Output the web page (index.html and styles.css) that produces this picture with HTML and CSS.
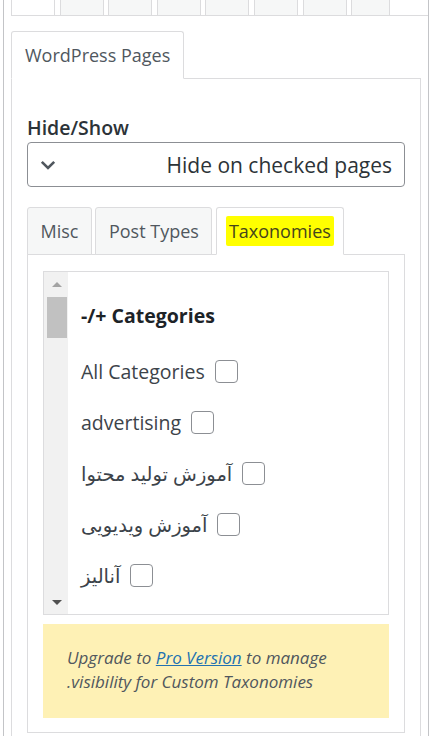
FILE: index.html
```html
<!DOCTYPE html>
<html lang="en">
<head>
    <meta charset="UTF-8">
    <meta name="viewport" content="width=device-width, initial-scale=1.0">
    <title>Widget Options - Visibility</title>
    <link rel="stylesheet" href="styles.css">
</head>
<body>
    <div class="widget-options">
        <!-- top icon tabs, scrolled mostly out of view -->
        <ul class="icon-tabs">
            <li class="current"></li>
            <li></li>
            <li></li>
            <li></li>
            <li></li>
            <li></li>
            <li></li>
            <li class="last"></li>
        </ul>

        <div class="pages-tabs">
            <span class="pages-tab">WordPress Pages</span>
        </div>

        <div class="pages-panel">
            <label class="field-label">Hide/Show</label>
            <div class="select-box">
                <svg class="chevron" width="16" height="10" viewBox="0 0 16 10">
                    <path d="M1.8 1.8 L8 8 L14.2 1.8" fill="none" stroke="#50575e" stroke-width="2.6"/>
                </svg>
                <span>Hide on checked pages</span>
            </div>

            <div class="sub-tabs">
                <span class="sub-tab">Misc</span>
                <span class="sub-tab">Post Types</span>
                <span class="sub-tab active"><mark>Taxonomies</mark></span>
            </div>

            <div class="sub-panel">
                <div class="terms-box">
                    <div class="scrollbar">
                        <span class="sb-button up"></span>
                        <span class="sb-thumb"></span>
                        <span class="sb-space"></span>
                        <span class="sb-button down"></span>
                    </div>
                    <div class="terms">
                        <h4>-/+ Categories</h4>
                        <label class="term">All Categories <input type="checkbox"></label>
                        <label class="term">advertising <input type="checkbox"></label>
                        <label class="term">آموزش تولید محتوا <input type="checkbox"></label>
                        <label class="term">آموزش ویدیویی <input type="checkbox"></label>
                        <label class="term">آنالیز <input type="checkbox"></label>
                    </div>
                </div>
                <p class="upgrade" dir="rtl">Upgrade to <a href="#">Pro Version</a> to manage visibility for Custom Taxonomies.</p>
            </div>
        </div>
    </div>
</body>
</html>
```

FILE: styles.css
```css
body {
    margin: 0;
    font-family: "Open Sans", "DejaVu Sans", sans-serif;
    color: #3c434a;
    background: #fff;
}
.widget-options {
    box-sizing: border-box;
    width: 426px;
    height: 736px;
    margin-left: 3px;
    padding: 0 7px;
    border-left: 1px solid #c3c4c7;
    border-right: 1px solid #c3c4c7;
    overflow: hidden;
}
.icon-tabs {
    display: flex;
    gap: 4.6px;
    height: 15px;
    margin: 0 -7px 0 0;
    padding: 0;
    list-style: none;
    border-bottom: 1px solid #dcdcde;
}
.icon-tabs li {
    box-sizing: border-box;
    width: 44px;
    border-left: 1px solid #dcdcde;
    border-right: 1px solid #dcdcde;
    background: #f6f7f7;
}
.icon-tabs li.current {
    background: #fff;
}
.icon-tabs li.last {
    width: 39px;
}
.pages-tabs {
    display: flex;
    margin-top: 15px;
}
.pages-tab,
.sub-tab {
    position: relative;
    box-sizing: border-box;
    height: 48px;
    margin-bottom: -1px;
    padding: 0 13px;
    line-height: 46px;
    font-size: 18px;
    color: #50575e;
    border: 1px solid #dcdcde;
    border-radius: 3px 3px 0 0;
}
.pages-tab {
    background: #fff;
    border-bottom-color: #fff;
}
.pages-panel {
    border: 1px solid #dcdcde;
    padding: 0 15px 40px;
}
.field-label {
    display: block;
    padding-top: 35px;
    font-size: 19.5px;
    font-weight: 600;
    line-height: 27px;
    color: #2c3338;
}
.select-box {
    box-sizing: border-box;
    display: flex;
    align-items: center;
    justify-content: space-between;
    height: 45px;
    margin-top: 1px;
    padding: 0 12px;
    border: 1px solid #8c8f94;
    border-radius: 4px;
    font-size: 21px;
    color: #2c3338;
}
.chevron {
    display: block;
}
.sub-tabs {
    display: flex;
    gap: 3.5px;
    margin-top: 20px;
}
.sub-tab {
    padding: 0 12.5px;
    background: #f6f7f7;
}
.sub-tab.active {
    padding: 0 12px;
    background: #fff;
    border-bottom-color: #fff;
}
.sub-tab mark {
    margin: 0 -3px;
    padding: 3px 3px;
    background: #ffff00;
    color: #45451c;
    border-radius: 2px;
}
.sub-panel {
    border: 1px solid #dcdcde;
    padding: 16px 15px 14px;
}
.terms-box {
    box-sizing: border-box;
    display: flex;
    height: 344px;
    border: 1px solid #dcdcde;
    overflow: hidden;
}
.scrollbar {
    flex: none;
    display: flex;
    flex-direction: column;
    align-items: center;
    width: 24px;
    box-sizing: border-box;
    padding-left: 2px;
    background: #f1f1f1;
}
.sb-button {
    display: flex;
    align-items: center;
    justify-content: center;
    height: 24px;
}
.sb-button::before {
    content: "";
    border-left: 5px solid transparent;
    border-right: 5px solid transparent;
}
.sb-button.up::before {
    border-bottom: 5px solid #a3a3a3;
}
.sb-button.down::before {
    border-top: 5px solid #505050;
}
.sb-thumb {
    width: 20px;
    height: 41px;
    margin-top: 1px;
    background: #c1c1c1;
}
.sb-space {
    flex: 1;
}
.terms {
    flex: 1;
    padding: 30px 0 0 13px;
}
.terms h4 {
    margin: 0 0 17px;
    font-size: 19.5px;
    font-weight: 700;
    line-height: 27px;
    color: #1d2327;
}
.term {
    display: flex;
    align-items: center;
    height: 51px;
    font-size: 19.5px;
    line-height: 27px;
    color: #3c434a;
}
.term input {
    appearance: none;
    box-sizing: border-box;
    width: 23px;
    height: 23px;
    margin: 0 0 0 10px;
    border: 1px solid #8c8f94;
    border-radius: 4px;
    background: #fff;
}
.upgrade {
    margin: 9px 0 0;
    padding: 22px 24px 24px;
    background: #fef1b5;
    font-size: 17px;
    font-style: italic;
    line-height: 24px;
    color: #50575e;
    text-align: left;
}
.upgrade a {
    color: #2271b1;
}
```
